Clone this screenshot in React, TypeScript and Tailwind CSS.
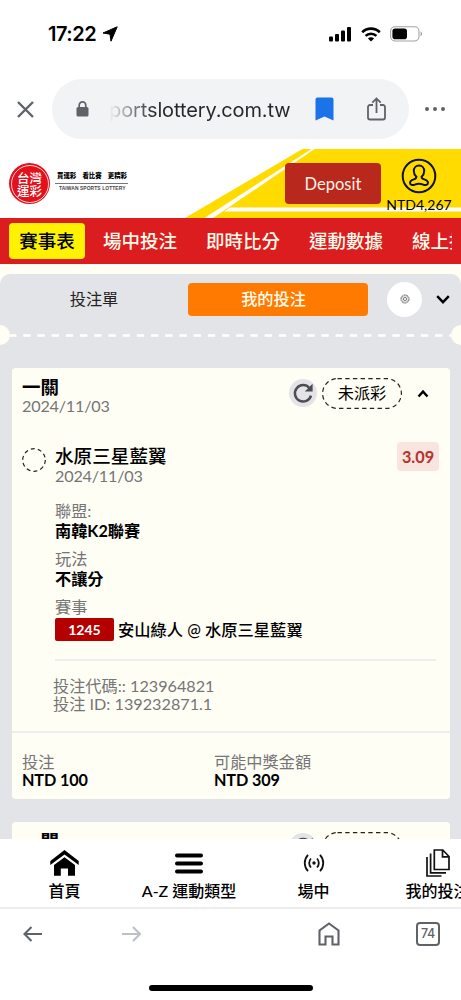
import type { ReactNode } from 'react';

const sans = "font-[Lato,'Noto_Sans_CJK_TC',sans-serif]";

const navItems = ['場中投注', '即時比分', '運動數據', '線上投注'];

const details = [
  { label: '聯盟:', value: '南韓K2聯賽' },
  { label: '玩法', value: '不讓分' },
];

function StatusBar() {
  return (
    <div className="flex h-[79px] shrink-0 items-start justify-between pt-[22px] pr-[38px] pl-[48px]">
      <div className="flex h-6 items-center gap-[5px]">
        <span className="w-[49px] font-[Inter,sans-serif] text-[20px] font-semibold tracking-[-0.5px] whitespace-nowrap text-black">
          17:22
        </span>
        <svg width="16" height="16" viewBox="0 0 16 16">
          <path d="M15.2.8 9 15.2 8 8.2 1 7z" fill="#000" stroke="#000" strokeLinejoin="round" />
        </svg>
      </div>
      <div className="flex h-6 items-center gap-[9px]">
        <svg width="24" height="16" viewBox="0 0 24 16">
          <rect x="1" y="10.5" width="4" height="5" rx="1" />
          <rect x="7" y="8" width="4" height="7.5" rx="1" />
          <rect x="13" y="4.5" width="4" height="11" rx="1" />
          <rect x="19" y="1" width="4" height="14.5" rx="1" />
        </svg>
        <svg width="20" height="15" viewBox="0 0 20 15" fill="none" stroke="#000" strokeWidth="2.6">
          <path d="M1.2 5.2a12.6 12.6 0 0 1 17.6 0" />
          <path d="M4.6 8.9a7.8 7.8 0 0 1 10.8 0" />
          <path d="M10 14.6 6.9 11.5a4.4 4.4 0 0 1 6.2 0z" fill="#000" stroke="none" />
        </svg>
        <svg width="33" height="16" viewBox="0 0 33 16">
          <rect x=".6" y=".8" width="28.4" height="14.2" rx="4.4" fill="none" stroke="#a3a3a3" strokeWidth="1.1" />
          <rect x="2.4" y="2.6" width="14.6" height="10.6" rx="2.8" />
          <path d="M30.6 5.6v4.6c1-.5 1.5-1.3 1.5-2.3s-.5-1.8-1.5-2.3z" fill="#a3a3a3" />
        </svg>
      </div>
    </div>
  );
}

function AddressBar() {
  return (
    <div className="flex h-[70px] shrink-0 items-start">
      <div className="flex h-[60px] w-[52px] items-center pl-[17px]">
        <svg width="17" height="17" viewBox="0 0 17 17" stroke="#5f6368" strokeWidth="2.4">
          <path d="m1 1 15 15M16 1 1 16" />
        </svg>
      </div>
      <div className="flex h-[60px] w-[357px] items-center rounded-full bg-[#f1f3f4]">
        <svg className="ml-[24px]" width="13" height="16" viewBox="0 0 13 16">
          <rect x=".5" y="6" width="12" height="9.5" rx="1.6" fill="#5f6368" />
          <path d="M3.2 7V4.2a3.3 3.3 0 0 1 6.6 0V7" fill="none" stroke="#5f6368" strokeWidth="1.7" />
        </svg>
        <span className="ml-[20px] w-[183px] bg-linear-to-r from-[#f1f3f4] to-[#25272b] to-[26%] bg-clip-text pt-px font-[Inter,sans-serif] text-[20px] tracking-[-0.12px] whitespace-nowrap text-transparent">
          portslottery.com.tw
        </span>
        <svg className="ml-[23px]" width="19" height="24" viewBox="0 0 19 24">
          <path d="M2.5.5h14a2 2 0 0 1 2 2v21l-9-4-9 4v-21a2 2 0 0 1 2-2z" fill="#1a73e8" />
        </svg>
        <svg className="ml-[33px]" width="19" height="24" viewBox="0 0 19 24" fill="none" stroke="#5f6368" strokeWidth="1.8">
          <path d="M6 8H3a2 2 0 0 0-2 2v10.5a2 2 0 0 0 2 2h13a2 2 0 0 0 2-2V10a2 2 0 0 0-2-2h-3" />
          <path d="M9.5 16V2M5.3 5.6l4.2-4.2 4.2 4.2" />
        </svg>
      </div>
      <div className="flex h-[60px] items-center gap-[4px] pl-[16px]">
        <i className="size-1 rounded-full bg-[#5f6368]" />
        <i className="size-1 rounded-full bg-[#5f6368]" />
        <i className="size-1 rounded-full bg-[#5f6368]" />
      </div>
    </div>
  );
}

function SiteHeader() {
  return (
    <header className="relative flex h-[69px] shrink-0 bg-white">
      <svg className="absolute inset-0" width="461" height="69" viewBox="0 0 461 69">
        <path d="M302.5 0H461v69H185z" fill="#ffdb00" />
        <path d="M311.5 0h3L213 69h-8.5zM230 58.5h231v4H224z" fill="#fff" />
      </svg>
      <div className="relative flex w-[285px] items-start pt-[14px] pl-[9px]">
        <div className="flex size-[41px] items-center justify-center rounded-full bg-[#e2111b]">
          <div className="flex size-[38px] flex-col items-center justify-center rounded-full border border-white/80 font-['Noto_Sans_CJK_TC',sans-serif] text-[12.5px] leading-[13px] font-medium text-white">
            <span>台灣</span>
            <span>運彩</span>
          </div>
        </div>
        <div className="mt-[9px] ml-[5px] w-[73px] text-black">
          <div className="flex h-[12px] items-center justify-between border-b border-[#777] pr-px pb-[2px] pl-[2px] font-['Noto_Sans_CJK_TC',sans-serif] text-[6.4px] leading-none font-black">
            <span>買運彩</span>
            <span>看比賽</span>
            <span>更精彩</span>
          </div>
          <div className="mt-px pl-[4px] font-['Liberation_Sans',sans-serif] text-[4.9px] leading-[8px] font-bold tracking-[0.1px] whitespace-nowrap text-[#444]">
            TAIWAN SPORTS LOTTERY
          </div>
        </div>
      </div>
      <button className="relative mt-[14px] h-[41px] w-[96px] rounded-[4px] bg-[#b8281c] pt-[2px] text-[16.5px] text-[#fff3e6]">
        Deposit
      </button>
      <div className="relative flex w-[76px] flex-col items-center pt-[9px]">
        <svg width="36" height="36" viewBox="0 0 36 36" fill="none" stroke="#111" strokeWidth="2">
          <circle cx="18" cy="18" r="16.3" />
          <path d="M15.4 18.8c-1.7-1.5-2.6-3.5-2.6-5.800 0-3.200 2.100-5.400 5.200-5.400s5.200 2.200 5.200 5.400c0 2.300-.9 4.300-2.600 5.800 0 1.800 1 2.200 2.600 2.600 2.700.7 3.800 1.600 3.800 3.400 0 2.200-2.600 2.800-4.800 1.800-2.600-1-5.800-1-8.400 0-2.200 1-4.800.4-4.800-1.800 0-1.800 1.100-2.700 3.800-3.400 1.600-.4 2.600-.8 2.600-2.600z" />
        </svg>
        <span className="mt-px text-[14px] leading-[20px] text-black">NTD4,267</span>
      </div>
    </header>
  );
}

function CategoryNav() {
  return (
    <nav className="flex h-[46px] shrink-0 items-center bg-[#dc1d1f] pr-[9px] pl-[9px] text-[18.5px] font-medium whitespace-nowrap text-[#fffbea]">
      <span className="flex h-[36px] w-[76px] shrink-0 items-center justify-center rounded-[4px] bg-[#fff200] pt-px text-black">
        賽事表
      </span>
      <div className="ml-[18px] flex min-w-0 flex-1 gap-[29px] overflow-hidden pt-px">
        {navItems.map((item) => (
          <span key={item} className="w-[74px] shrink-0">
            {item}
          </span>
        ))}
      </div>
    </nav>
  );
}

function Chevron({ up = false }: { up?: boolean }) {
  return (
    <svg width="14" height="9" viewBox="0 0 14 9" fill="none" stroke="#000" strokeWidth="2.4">
      <path d={up ? 'M2.5 7.5 7 2.6l4.5 4.9' : 'm1.2 1.2 5.8 6 5.8-6'} />
    </svg>
  );
}

function BetTabs() {
  return (
    <div className="flex h-[50px] items-center">
      <span className="w-[188px] text-center text-[16.2px] text-[#222]">投注單</span>
      <span className="flex h-[33px] w-[180px] items-center justify-center rounded-[4px] bg-[#ff7a00] pr-[9px] text-[16.2px] font-medium text-[#fffbea]">
        我的投注
      </span>
      <span className="ml-[19px] flex size-[35px] items-center justify-center rounded-full bg-white">
        <svg width="10" height="10" viewBox="0 0 10 10" fill="none" stroke="#555" strokeWidth=".8">
          <circle cx="5" cy="5" r="4.1" strokeDasharray="2 .5" />
          <circle cx="5" cy="5" r="3.3" strokeWidth=".4" />
          <circle cx="5" cy="5" r="1.6" />
        </svg>
      </span>
      <span className="ml-[14px]">
        <Chevron />
      </span>
    </div>
  );
}

function TicketDivider() {
  return (
    <div className="mt-px flex h-[20px] items-center justify-between overflow-hidden">
      <i className="-ml-[10px] size-[20px] shrink-0 rounded-full bg-[#fffef5]" />
      <svg width="441" height="3" viewBox="0 0 441 3">
        <path d="M-1 1.5h442" stroke="#fff" strokeWidth="2.6" strokeDasharray="7.4 6.8" />
      </svg>
      <i className="-mr-[10px] size-[20px] shrink-0 rounded-full bg-[#fffef5]" />
    </div>
  );
}

function SlipHeader({ date }: { date: string }) {
  return (
    <div className="flex justify-between pt-[9px] pr-[20px] pl-[10px]">
      <div>
        <div className="h-[19px] text-[18.5px] leading-[21px] font-bold text-black">一關</div>
        <div className="text-[16.2px] leading-[20px] tracking-[-0.2px] text-[#757575]">{date}</div>
      </div>
      <div className="flex h-[32px] items-center">
        <span className="flex size-[28px] items-center justify-center rounded-full bg-[#e4e4e8]">
          <svg width="22" height="22" viewBox="0 0 22 22">
            <path d="M19 13.6a8.2 8.2 0 1 1-1.6-7.6" fill="none" stroke="#4b4d52" strokeWidth="2.5" />
            <path d="M20.6 1.8v7.8h-7.8z" fill="#4b4d52" />
          </svg>
        </span>
        <span className="relative ml-[5px] flex h-[31px] w-[80px] items-center justify-center text-[16.2px] text-black">
          <svg className="absolute inset-0" width="80" height="31" viewBox="0 0 80 31">
            <rect x=".6" y=".6" width="78.8" height="29.8" rx="14.9" fill="none" stroke="#222" strokeWidth="1.2" strokeDasharray="4.4 3.3" />
          </svg>
          未派彩
        </span>
        <span className="ml-[14px]">
          <Chevron up />
        </span>
      </div>
    </div>
  );
}

function BetSlip() {
  return (
    <section className="mx-3 mt-[23px] h-[431px] w-[438px] rounded-[4px] bg-[#fffef5]">
      <SlipHeader date="2024/11/03" />

      <div className="flex pt-[30px] pl-[10px]">
        <svg className="mt-[2px]" width="24" height="24" viewBox="0 0 24 24">
          <circle cx="12" cy="12" r="11.3" fill="none" stroke="#222" strokeWidth="1.2" strokeDasharray="4 3.1" />
        </svg>
        <div className="ml-[9px] w-[342px] pb-px">
          <div className="h-[20px] text-[18.6px] leading-[21px] font-medium text-black">水原三星藍翼</div>
          <div className="text-[16.2px] leading-[20px] tracking-[-0.2px] text-[#757575]">2024/11/03</div>
        </div>
        <span className="-mt-[4px] flex h-[29px] w-[42px] items-center justify-center rounded-[4px] bg-[#f9e5e0] pt-px text-[16.3px] font-bold text-[#b8332b]">
          3.09
        </span>
      </div>

      <div className="mt-[14px] ml-[43px] w-[381px] border-b-2 border-[#ededea] pb-[18px] text-[16.2px] leading-[20px]">
        {details.map(({ label, value }) => (
          <div key={label} className="mb-[8px]">
            <div className="text-[#757575]">{label}</div>
            <div className="font-bold text-black">{value}</div>
          </div>
        ))}
        <div className="text-[#757575]">賽事</div>
        <div className="mt-px flex items-center">
          <span className="flex h-[23px] w-[59px] items-center justify-center rounded-[2px] bg-[#b50000] text-[14px] font-bold text-white">
            1245
          </span>
          <span className="ml-[4px] text-[16.3px] font-medium whitespace-nowrap text-black">安山綠人 @ 水原三星藍翼</span>
        </div>
      </div>

      <div className="border-b-2 border-[#ededea] pt-[16px] pb-[18px] pl-[41px] text-[16.2px] leading-[18px] text-[#757575]">
        <div>投注代碼:: 123964821</div>
        <div>投注 ID: 139232871.1</div>
      </div>

      <div className="flex pt-[20px] pl-[10px] text-[16.2px] leading-[18px]">
        <Amount label="投注">NTD 100</Amount>
        <Amount label="可能中獎金額">NTD 309</Amount>
      </div>
    </section>
  );
}

function Amount({ label, children }: { label: string; children: ReactNode }) {
  return (
    <div className="w-[192px]">
      <div className="text-[#757575]">{label}</div>
      <div className="font-bold tracking-[-0.1px] text-black">{children}</div>
    </div>
  );
}

function TabItem({ label, className, children }: { label: string; className: string; children: ReactNode }) {
  return (
    <div className={`flex shrink-0 flex-col items-center ${className}`}>
      <div className="flex h-[30px] items-center">{children}</div>
      <span className="mt-px text-[16px] leading-[24px] font-medium whitespace-nowrap text-black">{label}</span>
    </div>
  );
}

function AppTabBar() {
  return (
    <nav className="flex h-[70px] w-full shrink-0 overflow-hidden border-b-2 border-[#ececec] bg-white pt-[9px]">
      <TabItem label="首頁" className="w-[129px]">
        <svg width="29" height="26" viewBox="0 0 29 26">
          <path d="M14.5 0 .3 11v4l14.2-10.6L28.7 15v-4z" />
          <path d="M14.5 7.2 4 15v10.8h6.8v-7.3H18v7.3h7V15z" />
        </svg>
      </TabItem>
      <TabItem label="A-Z 運動類型" className="w-[120px]">
        <svg width="28" height="21" viewBox="0 0 28 21" stroke="#000" strokeWidth="4" strokeLinecap="round">
          <path d="M2 2.5h24M2 10.5h24M2 18.5h24" />
        </svg>
      </TabItem>
      <TabItem label="場中" className="w-[129px]">
        <svg width="22" height="18" viewBox="0 0 22 18" fill="none" stroke="#111" strokeWidth="1.8">
          <path d="M5 .8a12 12 0 0 0 0 16.4M17 .8a12 12 0 0 1 0 16.4M8 4.5a6.5 6.5 0 0 0 0 9M14 4.5a6.5 6.5 0 0 1 0 9" />
          <circle cx="11" cy="9" r="1.7" fill="#111" stroke="none" />
        </svg>
      </TabItem>
      <TabItem label="我的投注" className="w-[119px]">
        <svg width="24" height="28" viewBox="0 0 24 28" fill="none" stroke="#111" strokeWidth="1.7">
          <path d="M8.3 1h8.5L23 7.5v13H8.3zM16.5 1v6.8H23" />
          <path d="M4.6 4.5v19.3H20M1 8v19h14.5" />
        </svg>
      </TabItem>
    </nav>
  );
}

function BrowserToolbar() {
  return (
    <div className="flex h-[91px] shrink-0 flex-col items-center bg-white">
      <div className="flex h-[50px] w-full items-center pl-[23px]">
        <svg width="20" height="16" viewBox="0 0 20 16" fill="none" stroke="#5f6368" strokeWidth="2.1">
          <path d="M19 8H1.5M8.5 1l-7 7 7 7" />
        </svg>
        <svg className="ml-[79px]" width="20" height="16" viewBox="0 0 20 16" fill="none" stroke="#bdc1c6" strokeWidth="2.1">
          <path d="M0 8h18M11 1l7 7-7 7" />
        </svg>
        <svg className="ml-[176px]" width="22" height="24" viewBox="0 0 22 24" fill="none" stroke="#5f6368" strokeWidth="2.1">
          <path d="M1.5 22.5v-14L11 1.500l9.500 7v14h-6v-8h-7v8z" />
        </svg>
        <span className="ml-[76px] flex size-[24px] items-center justify-center rounded-[4px] border-2 border-[#5f6368] font-[Inter,sans-serif] text-[12.5px] font-medium tracking-[-0.3px] text-[#5f6368]">
          74
        </span>
      </div>
      <div className="mt-[26px] h-[6px] w-[164px] rounded-full bg-black" />
    </div>
  );
}

export default function App() {
  return (
    <div className={`flex h-[1000px] w-[461px] flex-col overflow-hidden bg-white ${sans}`}>
      <StatusBar />
      <AddressBar />
      <SiteHeader />
      <CategoryNav />
      <main className="h-[575px] shrink-0 overflow-hidden bg-[#fffef5] pt-[10px]">
        <div className="h-[600px] rounded-t-[10px] bg-[#e3e4e7]">
          <BetTabs />
          <TicketDivider />
          <BetSlip />
          <section className="mx-3 mt-[23px] h-[40px] w-[438px] rounded-t-[4px] bg-[#fffef5]">
            <SlipHeader date="2024/11/03" />
          </section>
        </div>
      </main>
      <AppTabBar />
      <BrowserToolbar />
    </div>
  );
}
